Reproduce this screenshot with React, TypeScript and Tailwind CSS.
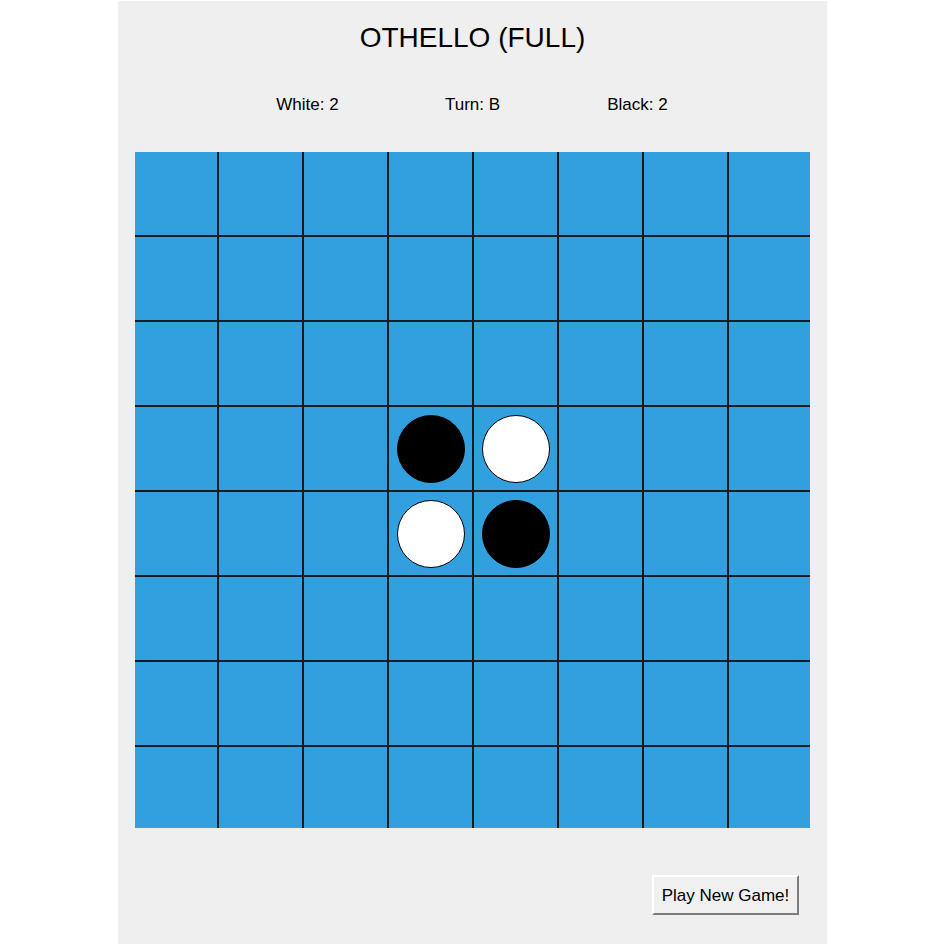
import React from "react";

type Piece = "B" | "W" | null;

const SIZE = 8;

// starting position: black on d4/e5, white on e4/d5
const initialBoard = (): Piece[][] => {
  const b: Piece[][] = Array.from({ length: SIZE }, () => Array(SIZE).fill(null));
  b[3][3] = "B";
  b[3][4] = "W";
  b[4][3] = "W";
  b[4][4] = "B";
  return b;
};

const App = () => {
  const board = initialBoard();
  const flat = board.flat();
  const white = flat.filter((p) => p === "W").length;
  const black = flat.filter((p) => p === "B").length;

  return (
    <div className="w-full min-h-screen bg-white pt-px font-['Liberation_Sans',Arial,sans-serif] text-black">
      <div className="mx-auto w-[709px] h-[943px] bg-[#efefef] flex flex-col items-center pt-[21px]">
        {/* Title */}
        <div className="text-[28px] leading-[32px]">OTHELLO (FULL)</div>

        {/* Score row */}
        <div className="mt-[41px] flex justify-center text-[17px] leading-[20px]">
          <div className="w-[165px] text-center">White: {white}</div>
          <div className="w-[165px] text-center">Turn: B</div>
          <div className="w-[165px] text-center">Black: {black}</div>
        </div>

        {/* Board */}
        <div className="mt-[37px] grid grid-cols-[82px_repeat(6,83px)_81px] grid-rows-[83px_repeat(6,83px)_81px] gap-[2px] bg-[#151b1f]">
          {board.map((row, r) =>
            row.map((cell, c) => (
              <div key={`${r}-${c}`} className="bg-[#32a0de] flex items-center justify-center">
                {cell === "B" && <div className="w-[68px] h-[68px] rounded-full bg-black border border-black" />}
                {cell === "W" && <div className="w-[68px] h-[68px] rounded-full bg-white border border-black" />}
              </div>
            ))
          )}
        </div>

        {/* Footer */}
        <div className="w-full flex justify-end pr-[28px] mt-[47px]">
          <button className="w-[147px] h-[40px] bg-[#f0f0f0] border-2 border-t-white border-l-white border-b-[#7c7c7c] border-r-[#7c7c7c] text-[17px] leading-[20px] flex items-center justify-center pt-[2px]">
            Play New Game!
          </button>
        </div>
      </div>
    </div>
  );
};

export default App;
